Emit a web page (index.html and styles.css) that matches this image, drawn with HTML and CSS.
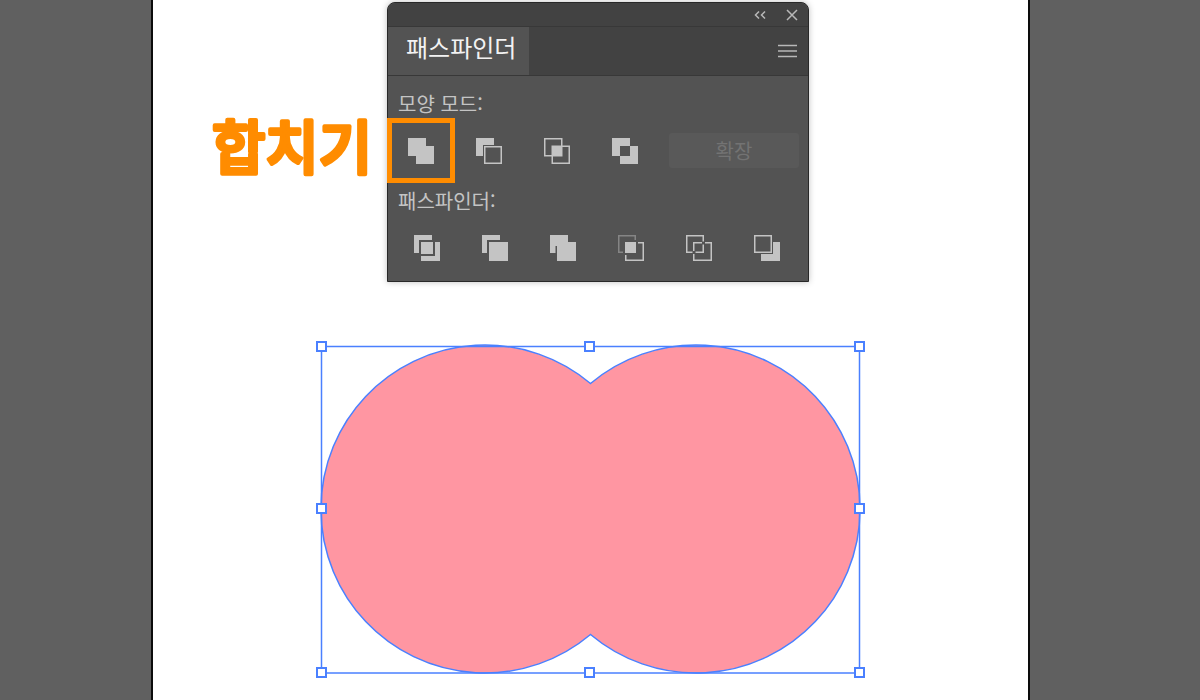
FILE: index.html
```html
<!DOCTYPE html>
<html lang="ko">
<head>
    <meta charset="UTF-8">
    <meta name="viewport" content="width=device-width, initial-scale=1.0">
    <title>패스파인더 - 합치기</title>
    <link rel="stylesheet" href="styles.css">
</head>
<body>

    <main class="artboard">
        <div class="tool-row">
            <svg class="callout" width="162" height="64" viewBox="0 0 162 64"><text x="1" y="59">합치기</text></svg>

            <section class="panel">
                <div class="title-bar">
                    <button class="icon-btn" aria-label="접기">
                        <svg width="12" height="8" viewBox="0 0 12 8"><path d="M5 0.5L1.5 4L5 7.5M11 0.5L7.5 4L11 7.5"/></svg>
                    </button>
                    <button class="icon-btn" aria-label="닫기">
                        <svg width="12" height="12" viewBox="0 0 12 12"><path d="M1 1L11 11M11 1L1 11"/></svg>
                    </button>
                </div>

                <div class="tab-bar">
                    <button class="tab">패스파인더</button>
                    <button class="icon-btn" aria-label="메뉴">
                        <svg width="19" height="14" viewBox="0 0 19 14"><path d="M0 1.5H19M0 7H19M0 12.5H19"/></svg>
                    </button>
                </div>

                <div class="panel-body">
                    <h2 class="group-title">모양 모드:</h2>
                    <div class="modes">
                        <button class="mode selected" aria-label="합치기">
                            <svg class="glyph" viewBox="0 0 26 26"><path class="solid" d="M0 0H18V8H26V26H8V18H0Z"/></svg>
                        </button>
                        <button class="mode" aria-label="앞면 오브젝트 제외">
                            <svg class="glyph" viewBox="0 0 26 26">
                                <path class="solid" d="M0 0H18V7H7V18H0Z"/>
                                <rect class="line" x="8.75" y="8.75" width="16.5" height="16.5"/>
                            </svg>
                        </button>
                        <button class="mode" aria-label="교차 영역">
                            <svg class="glyph" viewBox="0 0 26 26">
                                <rect class="line" x="0.75" y="0.75" width="17" height="17"/>
                                <rect class="line" x="8.25" y="8.25" width="17" height="17"/>
                                <rect class="solid" x="8" y="8" width="10" height="10"/>
                            </svg>
                        </button>
                        <button class="mode" aria-label="교차 영역 제외">
                            <svg class="glyph" viewBox="0 0 26 26"><path class="solid" fill-rule="evenodd" d="M0 0H18V8H26V26H8V18H0ZM8 8V18H18V8Z"/></svg>
                        </button>
                        <button class="expand" disabled>확장</button>
                    </div>

                    <h2 class="group-title">패스파인더:</h2>
                    <div class="modes finders">
                        <button class="mode" aria-label="나누기">
                            <svg class="glyph" viewBox="0 0 26 26">
                                <path class="solid" d="M0 0H18V5H5V18H0Z"/>
                                <rect class="solid" x="7" y="7" width="12" height="12"/>
                                <path class="solid" d="M21 7H26V26H7V21H21Z"/>
                            </svg>
                        </button>
                        <button class="mode" aria-label="동색 오브젝트 분리">
                            <svg class="glyph" viewBox="0 0 26 26">
                                <path class="solid" d="M0 0H18V5H5V18H0Z"/>
                                <rect class="solid" x="7" y="7" width="19" height="19"/>
                            </svg>
                        </button>
                        <button class="mode" aria-label="병합">
                            <svg class="glyph" viewBox="0 0 26 26"><path class="solid" d="M0 0H18V7H26V26H7V11H5.5V18H0Z"/></svg>
                        </button>
                        <button class="mode" aria-label="자르기">
                            <svg class="glyph" viewBox="0 0 26 26">
                                <path class="line dim" d="M17.25 5V0.75H0.75V17.25H5"/>
                                <rect class="solid" x="7" y="7" width="11" height="11"/>
                                <path class="line" d="M20 7.75H25.25V25.25H7.75V20"/>
                            </svg>
                        </button>
                        <button class="mode" aria-label="윤곽선">
                            <svg class="glyph" viewBox="0 0 26 26">
                                <path class="line" d="M17.25 6.5V0.75H0.75V17.25H6.5"/>
                                <path class="line" d="M7.75 16V7.75H16M17.25 9.5V17.25H9.5"/>
                                <path class="line" d="M19 7.75H25.25V25.25H7.75V19"/>
                            </svg>
                        </button>
                        <button class="mode" aria-label="이면 오브젝트 제외">
                            <svg class="glyph" viewBox="0 0 26 26">
                                <rect class="line" x="0.75" y="0.75" width="16.5" height="16.5"/>
                                <path class="solid" d="M19 7H26V26H7V19H19Z"/>
                            </svg>
                        </button>
                    </div>
                </div>
            </section>
        </div>

        <!-- Merged shape with its bounding box -->
        <svg class="shape" width="549" height="338" viewBox="0 0 549 338">
            <path class="merged" d="M274.5 42.5A164 164 0 1 0 274.5 293.5A164 164 0 1 0 274.5 42.5Z"/>
            <rect class="bounds" x="5.5" y="5.5" width="538" height="326.5"/>
            <g class="handles">
                <rect x="1" y="1" width="9" height="9"/>
                <rect x="269" y="1" width="9" height="9"/>
                <rect x="539" y="1" width="9" height="9"/>
                <rect x="1" y="163" width="9" height="9"/>
                <rect x="539" y="163" width="9" height="9"/>
                <rect x="1" y="327" width="9" height="9"/>
                <rect x="269" y="327" width="9" height="9"/>
                <rect x="539" y="327" width="9" height="9"/>
            </g>
        </svg>
    </main>

</body>
</html>
```
FILE: styles.css
```css
/* General styles */
* {
    box-sizing: border-box;
}

body {
    margin: 0;
    padding: 0 170px 0 151px;
    background: #606060;
    font-family: "Noto Sans CJK KR", sans-serif;
}

button {
    padding: 0;
    border: none;
    background: none;
    font-family: inherit;
    color: inherit;
}

svg {
    display: block;
}

.artboard {
    min-height: 100vh;
    padding-top: 2px;
    background: #fff;
    border: solid #0c0c0c;
    border-width: 0 2px;
}

.tool-row {
    display: flex;
    align-items: center;
    gap: 14px;
    padding-left: 58px;
}

/* Rounded heavy lettering */
.callout {
    flex: none;
    overflow: visible;
    font-size: 58px;
    font-weight: 500;
    fill: #ff8c00;
    stroke: #ff8c00;
    stroke-width: 4;
    stroke-linejoin: round;
}

/* Panel */
.panel {
    width: 422px;
    background: #535353;
    border: 1px solid #282828;
    border-radius: 8px 8px 0 0;
    box-shadow: 0 0 6px rgba(0, 0, 0, 0.25);
    color: #c4c4c4;
}

.title-bar {
    display: flex;
    justify-content: flex-end;
    align-items: center;
    gap: 20px;
    height: 24px;
    padding: 0 10px;
    background: #424242;
    border-bottom: 1px solid #383838;
    border-radius: 8px 8px 0 0;
}

.icon-btn svg {
    fill: none;
    stroke: #b8b8b8;
    stroke-width: 1.5;
}

.tab-bar {
    display: flex;
    justify-content: space-between;
    height: 48px;
    padding-right: 11px;
    background: #424242;
}

.tab {
    padding: 0 13px 8px 18px;
    background: #535353;
    font-size: 24px;
    font-weight: 400;
    line-height: 40px;
    color: #f2f2f2;
}

.group-title {
    margin: 0;
    padding-left: 10px;
    font-size: 20px;
    font-weight: 400;
    line-height: 28px;
}

.panel-body {
    padding-top: 14px;
    padding-bottom: 1px;
    border-top: 1px solid #383838;
}

.modes {
    display: flex;
    align-items: center;
    height: 65px;
    margin-left: -1px;
    margin-bottom: 4px;
}

.finders {
    margin: 0;
    padding-left: 5px;
}

.mode {
    display: flex;
    justify-content: center;
    align-items: center;
    width: 68px;
    height: 65px;
}

.mode.selected {
    border: 5px solid #ff8c00;
}

.glyph {
    flex: none;
    width: 26px;
    height: 26px;
}

.solid {
    fill: #c4c4c4;
}

.line {
    fill: none;
    stroke: #c4c4c4;
    stroke-width: 1.5;
}

.line.dim {
    stroke: #858585;
}

.expand {
    flex: 1;
    height: 35px;
    margin: 0 9px 0 10px;
    background: #595959;
    border-radius: 3px;
    font-size: 20px;
    font-weight: 400;
    line-height: 28px;
    color: #737373;
}

/* Merged shape */
.shape {
    margin: 59px 0 0 163px;
}

.merged {
    fill: #ff96a2;
    stroke: #4a80ff;
    stroke-width: 1.5;
}

.bounds {
    fill: none;
    stroke: #4a80ff;
    stroke-width: 1.5;
}

.handles {
    fill: #fff;
    stroke: #4a80ff;
    stroke-width: 2;
}
```
